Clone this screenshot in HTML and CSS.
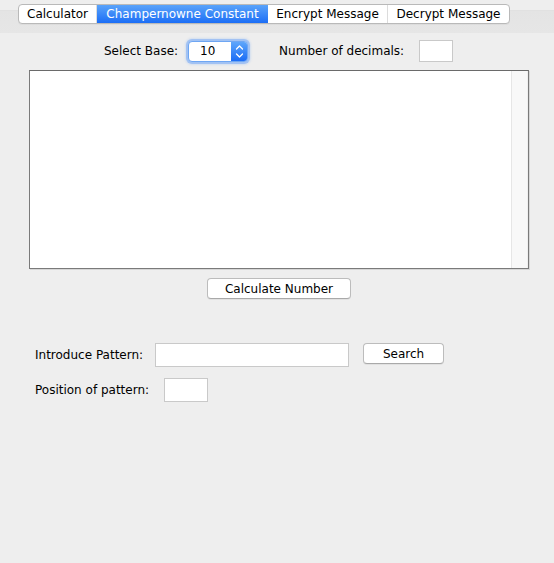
FILE: index.html
```html
<!DOCTYPE html>
<html>
<head>
<meta charset="utf-8">
<link rel="stylesheet" href="styles.css">
</head>
<body>
<div class="window">
  <div class="tabstrip">
    <div class="tabs">
      <div class="tab">Calculator</div>
      <div class="tab active">Champernowne Constant</div>
      <div class="tab">Encrypt Message</div>
      <div class="tab last">Decrypt Message</div>
    </div>
  </div>

  <div class="toprow">
    <span class="label">Select Base:</span>
    <div class="spinner">
      <div class="spin-field">10</div>
      <div class="spin-btn">
        <svg width="15" height="19" viewBox="0 0 15 19"><path d="M4.5 7 L7.5 4 L10.5 7 M4.5 12 L7.5 15 L10.5 12" fill="none" stroke="#fff" stroke-width="1.3" stroke-linecap="round" stroke-linejoin="round"/></svg>
      </div>
    </div>
    <span class="label decimals-label">Number of decimals:</span>
    <div class="field decimals"></div>
  </div>

  <div class="textarea-wrap">
    <div class="textarea">
      <div class="ta-body"></div>
      <div class="ta-track"></div>
    </div>
    <div class="calc-row">
      <div class="button calc">Calculate Number</div>
    </div>
  </div>

  <div class="pattern">
    <div class="prow">
      <span class="label plabel">Introduce Pattern:</span>
      <div class="field pattern-field"></div>
      <div class="button search">Search</div>
    </div>
    <div class="prow">
      <span class="label plabel2">Position of pattern:</span>
      <div class="field pos-field"></div>
    </div>
  </div>
</div>
</body>
</html>
```

FILE: styles.css
```css
html, body {
  margin: 0;
  padding: 0;
  background: #eeeeee;
}
body {
  font-family: "DejaVu Sans", "Liberation Sans", sans-serif;
  font-size: 12px;
  color: #000;
}
.window {
  width: 554px;
  height: 563px;
  background: #eeeeee;
}
.tabstrip {
  height: 33px;
  box-sizing: border-box;
  padding-top: 4px;
  padding-left: 18px;
  background: linear-gradient(to bottom, #eeeeee 0, #eeeeee 10px, #dedede 10px, #e4e4e4 11px, #e6e6e6 33px);
}
.tabs {
  display: inline-grid;
  grid-template-columns: 78px 171px 120px 121px;
  height: 20px;
  box-sizing: border-box;
  border: 1px solid #b9b9b9;
  border-radius: 4px;
  background: #fff;
  overflow: hidden;
  box-shadow: 0 1px 0 rgba(0,0,0,0.04);
}
.tab {
  display: flex;
  align-items: center;
  justify-content: center;
  line-height: 18px;
  color: #000;
  border-right: 1px solid #dcdcdc;
}
.tab.last { border-right: none; }
.tab.active {
  color: #fff;
  background: linear-gradient(to bottom, #5aa3fa, #1c6ef6);
  border-right: none;
}
.toprow {
  display: flex;
  align-items: center;
  padding-left: 104px;
  margin-top: 7px;
  height: 22px;
}
.label {
  color: #000;
  white-space: nowrap;
}
.spinner {
  margin-left: 10px;
  width: 60px;
  height: 21px;
  display: flex;
  box-sizing: border-box;
  border: 1px solid #6ea6f3;
  border-radius: 4px;
  box-shadow: 0 0 0 2px rgba(120, 170, 245, 0.55), 0 0 2px 3px rgba(150, 190, 245, 0.3);
  overflow: hidden;
  background: #fff;
}
.spin-field {
  flex: 1;
  padding-left: 11px;
  line-height: 19px;
  color: #000;
}
.spin-btn {
  width: 16px;
  background: linear-gradient(to bottom, #5ea6fb, #1a6cf5);
  display: flex;
  align-items: center;
  justify-content: center;
}
.spin-btn svg { display: block; }
.decimals-label { margin-left: 31px; }
.field {
  background: #fff;
  box-sizing: border-box;
  border: 1px solid #c9c9c9;
}
.decimals {
  margin-left: 15px;
  width: 34px;
  height: 22px;
}
.textarea-wrap {
  margin-top: 8px;
  margin-left: 29px;
  width: 500px;
}
.textarea {
  height: 199px;
  box-sizing: border-box;
  border: 1px solid #7a7a7a;
  border-top-color: #6a6a6a;
  box-shadow: 1px 1px 0 #d6d6d6;
  background: #fff;
  display: flex;
  justify-content: flex-end;
}
.ta-body { flex: 1; }
.ta-track {
  width: 15px;
  background: #f8f8f8;
  border-left: 1px solid #e6e6e6;
  border-right: 1px solid #efefef;
}
.calc-row {
  display: flex;
  justify-content: center;
  margin-top: 9px;
}
.button {
  box-sizing: border-box;
  height: 21px;
  display: flex;
  align-items: center;
  justify-content: center;
  background: #fff;
  border: 1px solid #bcbcbc;
  border-bottom-color: #a9a9a9;
  border-radius: 4px;
  color: #000;
  box-shadow: 0 1px 0 rgba(0,0,0,0.05);
}
.calc { width: 144px; }
.pattern {
  margin-top: 44px;
  padding-left: 35px;
  display: flex;
  flex-direction: column;
  gap: 11px;
}
.prow {
  display: flex;
  align-items: flex-start;
}
.plabel, .plabel2 {
  line-height: 24px;
}
.pattern-field {
  margin-left: 12px;
  width: 194px;
  height: 24px;
}
.search {
  margin-left: 14px;
  width: 81px;
}
.pos-field {
  margin-left: 15px;
  width: 44px;
  height: 24px;
}
```
